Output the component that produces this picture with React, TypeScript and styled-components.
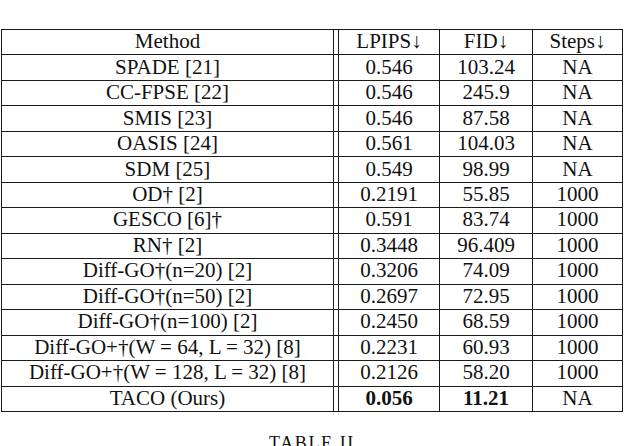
import React from "react";
import styled, { createGlobalStyle } from "styled-components";

const Global = createGlobalStyle`
  html, body { margin: 0; padding: 0; background: #ffffff; }
  body { font-family: "Liberation Serif", Tinos, "Times New Roman", serif; color: #111; }
`;

const Page = styled.div`
  width: 640px;
  height: 446px;
  overflow: hidden;
  padding: 29px 0 0 1px;
  box-sizing: border-box;
  font-family: "Liberation Serif", Tinos, "Times New Roman", serif;
`;

const Frame = styled.div`
  width: 622px;
`;

const Table = styled.div`
  display: grid;
  grid-template-columns: 332px 5px 101px 93px 90px;
  grid-template-rows: repeat(15, 1fr);
  height: 383px;
  border-top: 1px solid #1a1a1a;
  border-left: 1px solid #1a1a1a;
  box-sizing: border-box;
  width: 622px;
`;

const Cell = styled.div<{ $bold?: boolean }>`
  display: flex;
  align-items: center;
  justify-content: center;
  border-right: 1px solid #1a1a1a;
  border-bottom: 1px solid #1a1a1a;
  box-sizing: border-box;
  font-family: "Liberation Serif", Tinos, "Times New Roman", serif;
  font-size: 21px;
  line-height: 1;
  padding-bottom: 1px;
  white-space: nowrap;
  font-weight: ${(p) => (p.$bold ? 700 : 400)};
`;

const Spacer = styled.div`
  border-right: 1px solid #1a1a1a;
  border-bottom: 1px solid #1a1a1a;
  box-sizing: border-box;
`;

const Caption = styled.div`
  margin-top: 21px;
  text-align: center;
  font-family: "Liberation Serif", Tinos, "Times New Roman", serif;
  font-size: 18px;
  letter-spacing: 1.6px;
  font-variant: small-caps;
`;

type Row = { m: string; l: string; f: string; s: string; bl?: boolean; bf?: boolean };

const rows: Row[] = [
  { m: "Method", l: "LPIPS↓", f: "FID↓", s: "Steps↓" },
  { m: "SPADE [21]", l: "0.546", f: "103.24", s: "NA" },
  { m: "CC-FPSE [22]", l: "0.546", f: "245.9", s: "NA" },
  { m: "SMIS [23]", l: "0.546", f: "87.58", s: "NA" },
  { m: "OASIS [24]", l: "0.561", f: "104.03", s: "NA" },
  { m: "SDM [25]", l: "0.549", f: "98.99", s: "NA" },
  { m: "OD† [2]", l: "0.2191", f: "55.85", s: "1000" },
  { m: "GESCO [6]†", l: "0.591", f: "83.74", s: "1000" },
  { m: "RN† [2]", l: "0.3448", f: "96.409", s: "1000" },
  { m: "Diff-GO†(n=20) [2]", l: "0.3206", f: "74.09", s: "1000" },
  { m: "Diff-GO†(n=50) [2]", l: "0.2697", f: "72.95", s: "1000" },
  { m: "Diff-GO†(n=100) [2]", l: "0.2450", f: "68.59", s: "1000" },
  { m: "Diff-GO+†(W = 64, L = 32) [8]", l: "0.2231", f: "60.93", s: "1000" },
  { m: "Diff-GO+†(W = 128, L = 32) [8]", l: "0.2126", f: "58.20", s: "1000" },
  { m: "TACO (Ours)", l: "0.056", f: "11.21", s: "NA", bl: true, bf: true },
];

export default function App() {
  return (
    <>
      <Global />
      <Page>
        <Frame>
          <Table>
            {rows.map((r, i) => (
              <React.Fragment key={i}>
                <Cell>{r.m}</Cell>
                <Spacer />
                <Cell $bold={r.bl}>{r.l}</Cell>
                <Cell $bold={r.bf}>{r.f}</Cell>
                <Cell>{r.s}</Cell>
              </React.Fragment>
            ))}
          </Table>
          <Caption>TABLE II</Caption>
        </Frame>
      </Page>
    </>
  );
}
